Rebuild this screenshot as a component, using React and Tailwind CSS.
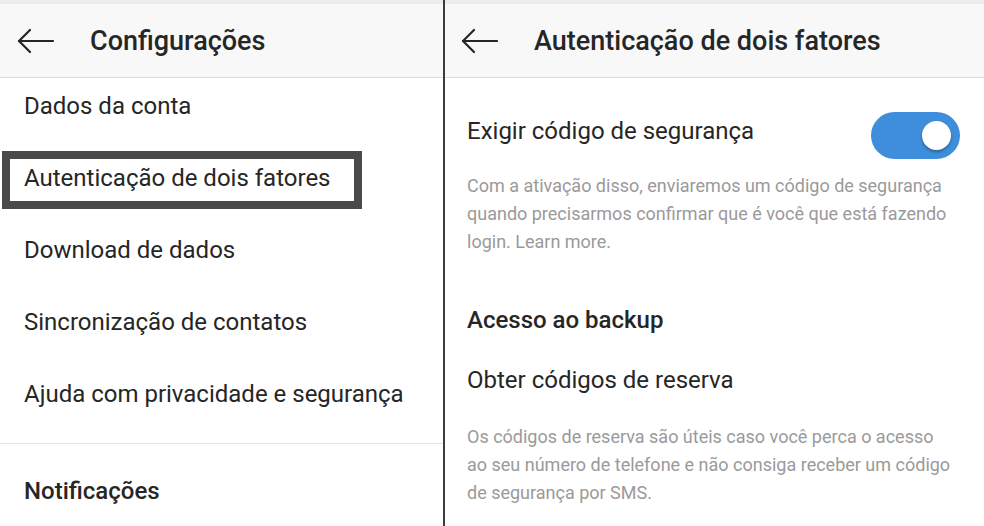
export default function App() {
  const font = { fontFamily: "Roboto, 'Noto Sans', sans-serif" }

  const Arrow = () => (
    <svg width="37" height="26" viewBox="0 0 37 26" fill="none" stroke="#262626" strokeWidth="2.2" strokeLinecap="round" strokeLinejoin="round">
      <path d="M36 13H2" />
      <path d="M13 2L2 13l11 11" />
    </svg>
  )

  const items = [
    'Dados da conta',
    'Autenticação de dois fatores',
    'Download de dados',
    'Sincronização de contatos',
    'Ajuda com privacidade e segurança',
  ]

  return (
    <div className="w-[984px] h-[526px] flex bg-white overflow-hidden text-[#262626]" style={font}>
      {/* left: Configurações */}
      <div className="w-[443px] flex flex-col">
        <div className="h-[4px] bg-[#ececec]" />
        <div className="h-[74px] flex items-center bg-[#f8f8f8] border-b border-[#dcdcdc]">
          <div className="ml-[17px] flex items-center"><Arrow /></div>
          <span className="ml-[36px] text-[27px] font-medium leading-[30px]">Configurações</span>
        </div>

        <ul className="flex flex-col gap-[42px] pt-[13px] pl-[24px]">
          {items.map((t, i) => (
            <li key={t} className="relative text-[24px] leading-[30px]">
              {t}
              {i === 1 && (
                <span className="absolute left-[-22px] top-[-12px] w-[360px] h-[58px] border-[8px] border-[#4a4a4a]" />
              )}
            </li>
          ))}
        </ul>

        <div className="mt-[34px] h-px bg-[#e2e2e2]" />
        <div className="pt-[32px] pl-[24px] text-[24px] leading-[30px] font-medium">Notificações</div>
      </div>

      {/* divider */}
      <div className="w-[2px] bg-[#3c3c3c]" />

      {/* right: Autenticação de dois fatores */}
      <div className="flex-1 flex flex-col">
        <div className="h-[4px] bg-[#ececec]" />
        <div className="h-[74px] flex items-center bg-[#f8f8f8] border-b border-[#dcdcdc]">
          <div className="ml-[16px] flex items-center"><Arrow /></div>
          <span className="ml-[36px] text-[27px] font-medium leading-[30px]">Autenticação de dois fatores</span>
        </div>

        <div className="flex flex-col pl-[22px] pr-[24px]">
          <div className="mt-[34px] flex items-start justify-between">
            <span className="mt-[4px] text-[24px] leading-[30px]">Exigir código de segurança</span>
            <div className="w-[89px] h-[47px] rounded-full bg-[#3f8edb] flex items-center justify-end pr-[9px]">
              <div className="w-[29px] h-[29px] rounded-full bg-white shadow-[0_2px_3px_rgba(0,0,0,0.3)]" />
            </div>
          </div>

          <p className="mt-[13px] text-[18px] leading-[28px] text-[#9a9a9a]">
            Com a ativação disso, enviaremos um código de segurança<br />
            quando precisarmos confirmar que é você que está fazendo<br />
            login. Learn more.
          </p>

          <div className="mt-[49px] text-[24px] leading-[30px] font-medium">Acesso ao backup</div>
          <div className="mt-[30px] text-[24px] leading-[30px]">Obter códigos de reserva</div>

          <p className="mt-[28px] text-[18px] leading-[28px] text-[#9a9a9a]">
            Os códigos de reserva são úteis caso você perca o acesso<br />
            ao seu número de telefone e não consiga receber um código<br />
            de segurança por SMS.
          </p>
        </div>
      </div>
    </div>
  )
}
